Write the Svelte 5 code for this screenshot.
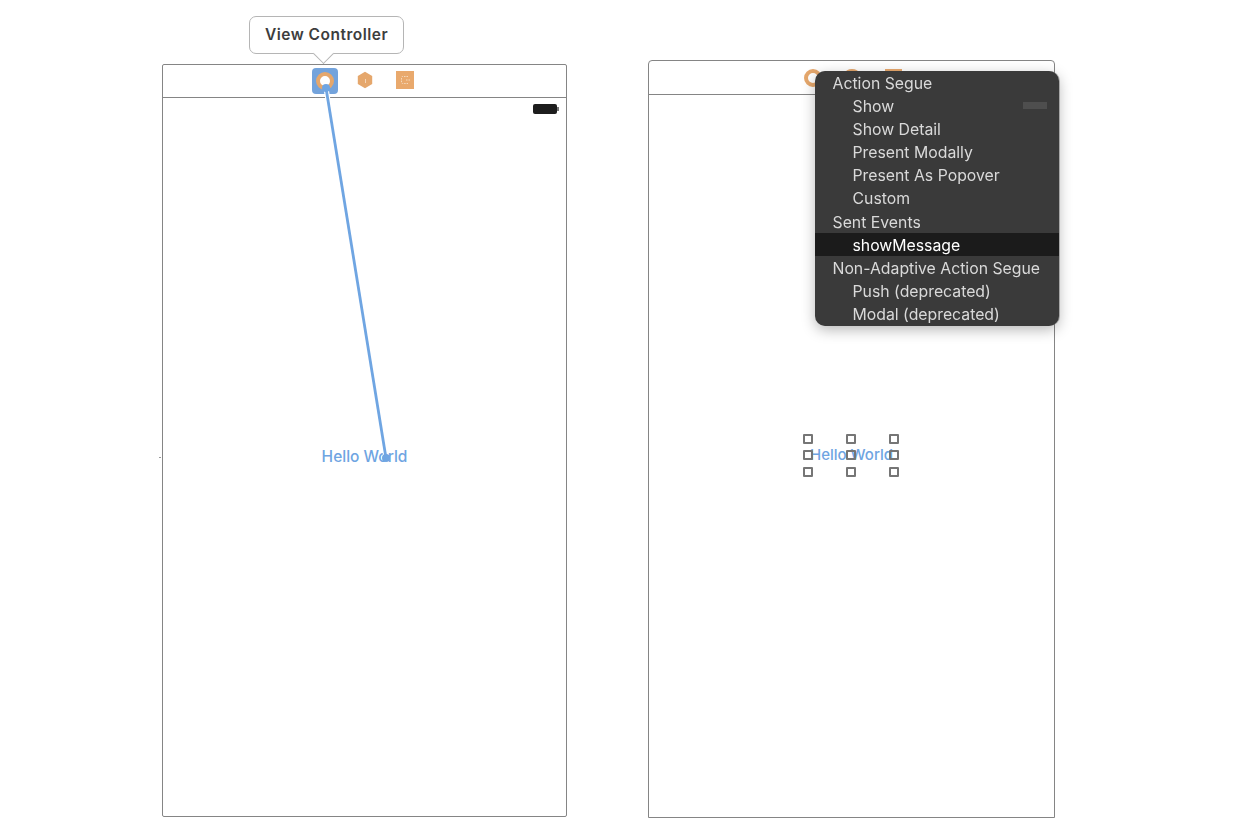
<script>
  const menu = [
    { label: 'Action Segue', head: true },
    { label: 'Show' },
    { label: 'Show Detail' },
    { label: 'Present Modally' },
    { label: 'Present As Popover' },
    { label: 'Custom' },
    { label: 'Sent Events', head: true },
    { label: 'showMessage', active: true },
    { label: 'Non-Adaptive Action Segue', head: true },
    { label: 'Push (deprecated)' },
    { label: 'Modal (deprecated)' }
  ];
  const handles = [0, 1, 2, 3, 4, 5, 6, 7, 8];
</script>

<div class="page">
  <section class="scene left">
    <header class="dock">
      <div class="icons">
        <span class="selected"><span class="vc"></span></span>
        <svg class="cube" width="18" height="18" viewBox="0 0 18 18"><path d="M9 .8 16.2 4.9V13.1L9 17.2 1.8 13.1V4.9Z" fill="#e5a76c" /><path d="M9.5 8v4" stroke="#f3d5b8" stroke-width="1" /></svg>
        <span class="exit"><svg width="18" height="18" viewBox="0 0 18 18"><rect width="18" height="18" fill="#e9a96d" /><path d="M12 5.5H6.5a1 1 0 0 0-1 1v5a1 1 0 0 0 1 1H12M10 9h4" fill="none" stroke="#f5d9bd" stroke-width="1" stroke-dasharray="1.5 1" /></svg></span>
      </div>
    </header>
    <div class="canvas">
      <div class="battery"><span></span></div>
      <div class="hello">Hello World</div>
      <span class="tick"></span>
    </div>
    <div class="tip">View Controller</div>
    <svg class="wire" width="80" height="380" viewBox="0 0 80 380">
      <path d="M5 5 65 375" stroke="#fff" stroke-width="5" />
      <path d="M5 5 65 375" stroke="#6fa5e2" stroke-width="2.8" />
      <circle cx="5" cy="5" r="4" fill="#6fa5e2" />
      <circle cx="65" cy="375" r="4" fill="#6fa5e2" />
    </svg>
  </section>

  <section class="scene right">
    <header class="dock short">
      <span class="ring"></span>
      <span class="peek-a"></span>
      <span class="peek-b"></span>
    </header>
    <div class="canvas">
      <div class="selection">
        <div class="hello inner">Hello World</div>
        <div class="grid">
          {#each handles as h (h)}
            <i></i>
          {/each}
        </div>
      </div>
    </div>
    <nav class="menu">
      {#each menu as item (item.label)}
        <div class="row" class:head={item.head} class:active={item.active}>{item.label}</div>
      {/each}
      <span class="smudge"></span>
    </nav>
  </section>
</div>

<style>
  :global(body) {
    margin: 0;
    background: #fff;
  }
  .page {
    display: flex;
    align-items: flex-start;
    gap: 81px;
    width: 1240px;
    height: 837px;
    box-sizing: border-box;
    padding-left: 162px;
    overflow: hidden;
    font-family: Inter, "Liberation Sans", sans-serif;
    filter: blur(0.35px);
  }
  .scene {
    position: relative;
    box-sizing: border-box;
    display: flex;
    flex-direction: column;
    border: 1px solid #858585;
    background: #fff;
  }
  .left {
    width: 405px;
    height: 753px;
    margin-top: 64px;
    border-radius: 2px;
  }
  .right {
    width: 407px;
    height: 758px;
    margin-top: 60px;
    border-radius: 4px 4px 0 0;
  }
  .dock {
    flex: none;
    height: 32px;
    display: flex;
    justify-content: center;
    border-bottom: 1px solid #858585;
  }
  .dock.short {
    position: relative;
    height: 33px;
  }
  .icons {
    display: flex;
    align-items: center;
    gap: 18px;
    margin-left: -4px;
    transform: translateY(-1px);
  }
  .selected {
    width: 26px;
    height: 26px;
    margin-top: 2px;
    display: grid;
    place-items: center;
    border-radius: 4px;
    background: #73a3dc;
  }
  .vc {
    display: block;
    box-sizing: border-box;
    width: 18px;
    height: 18px;
    border: 4.5px solid #e5a76c;
    border-radius: 50%;
    background: #fff;
  }
  .cube {
    display: block;
  }
  .exit {
    display: block;
    height: 18px;
    margin-left: 4px;
  }
  .exit svg {
    display: block;
  }
  .ring {
    position: absolute;
    left: 155px;
    top: 8px;
    box-sizing: border-box;
    width: 18px;
    height: 18px;
    border: 4.5px solid #e5a76c;
    border-radius: 50%;
  }
  .peek-a {
    position: absolute;
    left: 196px;
    top: 8px;
    width: 14px;
    height: 8px;
    border-radius: 50%;
    background: #e5a76c;
  }
  .peek-b {
    position: absolute;
    left: 236px;
    top: 8px;
    width: 17px;
    height: 8px;
    background: #e9a96d;
  }
  .canvas {
    flex: 1;
    position: relative;
    display: flex;
    align-items: center;
    justify-content: center;
  }
  .battery {
    position: absolute;
    top: 6px;
    right: 7px;
    display: flex;
    align-items: center;
  }
  .battery span {
    display: block;
    width: 24px;
    height: 10px;
    border-radius: 2px;
    background: #1d1d1d;
  }
  .battery::after {
    content: '';
    width: 2px;
    height: 4px;
    background: #777;
  }
  .tick {
    position: absolute;
    left: -4px;
    top: 359px;
    width: 2px;
    height: 1px;
    background: #999;
  }
  .hello {
    color: #6fa5e2;
    font-size: 15.5px;
    font-weight: 500;
    line-height: 20px;
  }
  .left .hello {
    transform: translateY(-0.5px);
  }
  .selection {
    position: relative;
    width: 96px;
    height: 43px;
    display: grid;
    place-items: center;
    transform: translate(-1px, -1px);
  }
  .inner {
    font-size: 15px;
    white-space: nowrap;
    transform: translateX(1px);
  }
  .grid {
    position: absolute;
    inset: 0;
    display: grid;
    grid-template-columns: repeat(3, 10px);
    grid-template-rows: repeat(3, 10px);
    justify-content: space-between;
    align-content: space-between;
  }
  .grid i {
    box-sizing: border-box;
    display: block;
    border: 2px solid #767676;
    border-radius: 1px;
  }
  .tip {
    position: absolute;
    left: 86px;
    top: -49px;
    box-sizing: border-box;
    width: 155px;
    height: 38px;
    padding-bottom: 1px;
    display: grid;
    place-items: center;
    border: 1px solid #b5b5b5;
    border-radius: 7px;
    background: #fff;
    color: #3d3d3d;
    font-size: 15.5px;
    font-weight: 600;
    letter-spacing: 0.5px;
  }
  .tip::after {
    content: '';
    position: absolute;
    left: 66px;
    bottom: -8px;
    width: 15px;
    height: 15px;
    box-sizing: border-box;
    border-right: 1px solid #b5b5b5;
    border-bottom: 1px solid #b5b5b5;
    background: #fff;
    transform: rotate(45deg);
  }
  .wire {
    position: absolute;
    left: 158px;
    top: 18px;
  }
  .menu {
    position: absolute;
    left: 166px;
    top: 10px;
    box-sizing: border-box;
    width: 244px;
    height: 255px;
    border-radius: 10px;
    background: #3a3a3a;
    box-shadow: 0 4px 14px rgba(0, 0, 0, 0.28), 1px 0 0 rgba(130, 130, 130, 0.5);
    overflow: hidden;
    color: #d9d9d9;
    font-size: 15.8px;
  }
  .row {
    box-sizing: border-box;
    height: 23.1px;
    line-height: 23.1px;
    padding: 1px 0 0 37.5px;
    white-space: nowrap;
  }
  .row.head {
    padding-left: 17.5px;
  }
  .row.active {
    background: #1b1b1b;
    color: #fff;
  }
  .smudge {
    position: absolute;
    top: 31px;
    right: 12px;
    width: 24px;
    height: 7px;
    background: #4e4e4e;
  }
</style>
